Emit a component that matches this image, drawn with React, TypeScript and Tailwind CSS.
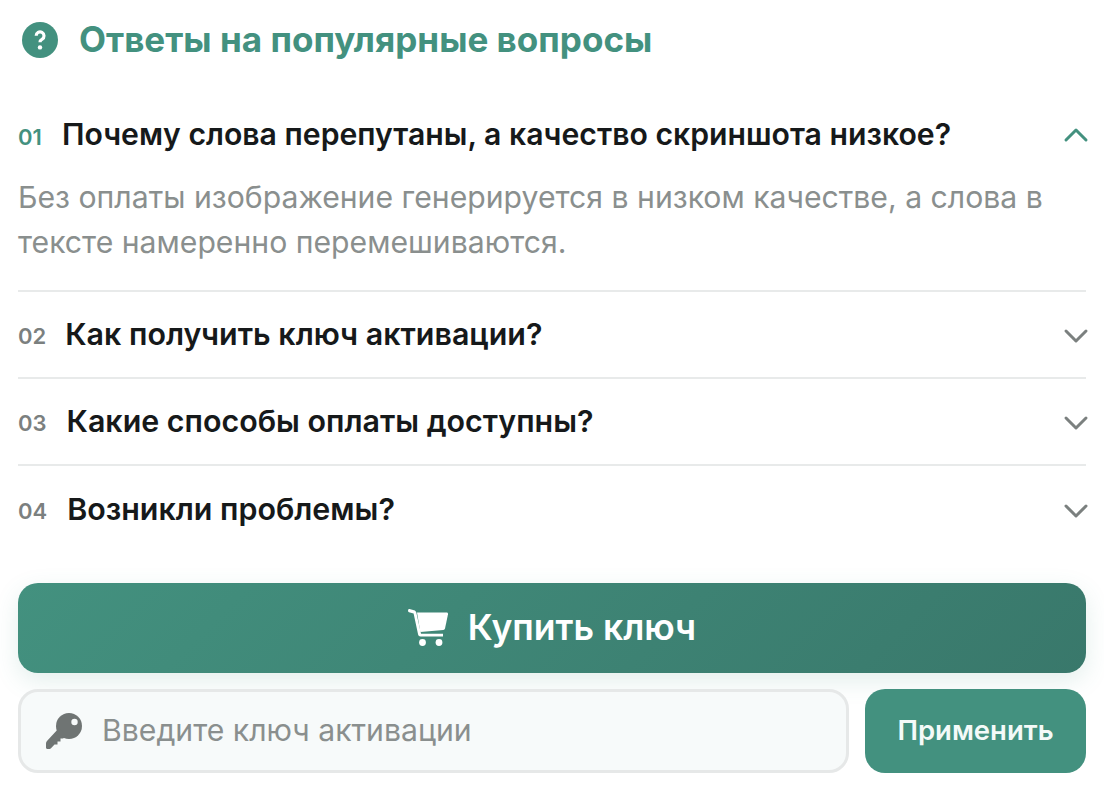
import { ChevronDown, ChevronUp } from "lucide-react";

const faqs = [
  { num: "02", question: "Как получить ключ активации?", gap: "gap-[19px]" },
  { num: "03", question: "Какие способы оплаты доступны?", gap: "gap-[20px]" },
  { num: "04", question: "Возникли проблемы?", gap: "gap-[20px]" },
];

function HelpIcon() {
  return (
    <svg viewBox="0 0 36 36" className="h-9 w-9">
      <circle cx="18" cy="18" r="18" fill="#43917f" />
      <path d="M14.2 13.8a3.9 3.9 0 1 1 6 3.3c-1.5.9-2.2 1.5-2.2 3.1" fill="none" stroke="#fff" strokeWidth="3.2" />
      <circle cx="18" cy="25.4" r="2.2" fill="#fff" />
    </svg>
  );
}

function CartIcon() {
  return (
    <svg viewBox="0 0 40 37" className="mb-[2px] h-[37px] w-10" fill="#fff">
      <path d="M1.5 0 6 1.2c1.3.4 2 1.2 2.3 2.4L13 24.8h22v2.8H12.6c-1.4 0-2.2-.7-2.5-2L5.6 4.4 1 3.2C-.6 2.6 0-.4 1.5 0Z" />
      <path d="M9 3.4h29.6c1 0 1.6.8 1.4 1.8L37 19.6c-.2.9-.8 1.4-1.7 1.5l-23 1.9Z" />
      <circle cx="14.5" cy="33.5" r="3.4" />
      <circle cx="31" cy="33.5" r="3.4" />
    </svg>
  );
}

function KeyIcon() {
  return (
    <svg viewBox="0 0 36 36" className="h-9 w-9" fill="#6f7473">
      <circle cx="23" cy="13" r="13" />
      <path d="M13 15 21 23 17 25.5 14.5 25.5 14.5 28.5 11.5 28.5 11.5 31.5 8.5 31.5 5 35.2C4.2 36 3 36 2 36H1.5C.6 36 0 35.4 0 34.5V30.5C0 29.4.4 28.5 1.2 27.7Z" />
      <circle cx="28.5" cy="9" r="3.2" fill="#f7fafa" />
    </svg>
  );
}

export default function App() {
  return (
    <main className="h-[792px] w-[1104px] overflow-hidden bg-white px-[18px] font-['Inter',sans-serif]">
      <header className="flex h-[79px] items-center gap-[21px] pl-1">
        <HelpIcon />
        <h1 className="pb-[2px] text-[35.05px] leading-10 font-bold text-[#43917f]">Ответы на популярные вопросы</h1>
      </header>

      <section className="mt-[11px]">
        <div className="border-b-2 border-[#e8eaea] pb-[25px]">
          <div className="flex h-[90px] items-center">
            <span className="mt-1 w-[44px] text-[22px] font-semibold text-[#43917f]">01</span>
            <h2 className="flex-1 pb-[2px] text-[30.2px] leading-9 font-semibold text-[#16191a]">
              Почему слова перепутаны, а качество скриншота низкое?
            </h2>
            <ChevronUp className="mr-[-10px] h-10 w-10 text-[#43917f]" strokeWidth={1.8} />
          </div>
          <p className="mt-[-5px] text-[30.2px] leading-[45px] text-[#8a8f8e]">
            Без оплаты изображение генерируется в низком качестве, а слова в тексте намеренно перемешиваются.
          </p>
        </div>

        {faqs.map((faq, i) => (
          <div
            key={faq.num}
            className={`flex h-[87px] items-center ${faq.gap} ${i < faqs.length - 1 ? "border-b-2 border-[#e8eaea]" : ""}`}
          >
            <span className="mt-1 text-[22px] font-semibold text-[#7b807f]">{faq.num}</span>
            <h2 className="flex-1 pb-[2px] text-[30.4px] leading-9 font-semibold text-[#16191a]">{faq.question}</h2>
            <ChevronDown className="mt-[3px] mr-[-10px] h-10 w-10 text-[#7b807f]" strokeWidth={1.8} />
          </div>
        ))}
      </section>

      <button className="mt-[30px] flex h-[90px] w-full items-center justify-center gap-[20px] rounded-[20px] bg-[linear-gradient(135deg,#43917f,#39786b)] text-[35.5px] font-semibold text-white shadow-[0_8px_24px_rgba(67,145,127,0.15)]">
        <CartIcon />
        Купить ключ
      </button>

      <div className="mt-4 flex h-[84px] gap-4">
        <label className="flex flex-1 items-center gap-[20px] rounded-[20px] border-[3px] border-[#e6e8e8] bg-[#f7fafa] pl-[25px]">
          <KeyIcon />
          <span className="text-[30.2px] text-[#8a8f8e]">Введите ключ активации</span>
        </label>
        <button className="w-[221px] rounded-[20px] bg-[#43917f] text-[27.5px] font-semibold text-[#f4faf8]">
          Применить
        </button>
      </div>
    </main>
  );
}
